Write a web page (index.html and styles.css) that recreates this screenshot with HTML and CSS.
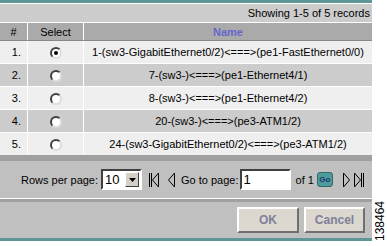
FILE: index.html
```html
<!DOCTYPE html>
<html lang="en">
<head>
    <meta charset="UTF-8">
    <title>Links</title>
    <link rel="stylesheet" href="styles.css">
</head>
<body>
    <div class="page">
        <div class="panel">
            <div class="topline"></div>
            <div class="info">Showing 1-5 of 5 records</div>
            <table class="grid">
                <thead>
                    <tr>
                        <th class="num">#</th>
                        <th class="sel">Select</th>
                        <th class="name">Name</th>
                    </tr>
                </thead>
                <tbody>
                    <tr class="odd">
                        <td class="num">1.</td>
                        <td class="sel"><span class="radio checked"></span></td>
                        <td class="name">1-(sw3-GigabitEthernet0/2)&lt;===&gt;(pe1-FastEthernet0/0)</td>
                    </tr>
                    <tr class="even">
                        <td class="num">2.</td>
                        <td class="sel"><span class="radio"></span></td>
                        <td class="name">7-(sw3-)&lt;===&gt;(pe1-Ethernet4/1)</td>
                    </tr>
                    <tr class="odd">
                        <td class="num">3.</td>
                        <td class="sel"><span class="radio"></span></td>
                        <td class="name">8-(sw3-)&lt;===&gt;(pe1-Ethernet4/2)</td>
                    </tr>
                    <tr class="even">
                        <td class="num">4.</td>
                        <td class="sel"><span class="radio"></span></td>
                        <td class="name">20-(sw3-)&lt;===&gt;(pe3-ATM1/2)</td>
                    </tr>
                    <tr class="odd">
                        <td class="num">5.</td>
                        <td class="sel"><span class="radio"></span></td>
                        <td class="name">24-(sw3-GigabitEthernet0/2)&lt;===&gt;(pe3-ATM1/2)</td>
                    </tr>
                </tbody>
            </table>
            <div class="divider"></div>
            <div class="pager">
                <span class="label">Rows per page:</span>
                <span class="select"><span class="value">10</span><span class="drop"><svg width="7" height="4" viewBox="0 0 7 4"><path d="M0 0h7L3.5 4z" fill="#000"/></svg></span></span>
                <svg class="nav first" width="10" height="16" viewBox="0 0 10 16"><path d="M0.5 1v14M2.5 1v14" stroke="#000" fill="none"/><path d="M9.5 1L3.5 8l6 7z" stroke="#000" fill="#c0c0c0"/></svg>
                <svg class="nav prev" width="8" height="16" viewBox="0 0 8 16"><path d="M7.5 1L1.5 8l6 7z" stroke="#000" fill="#c0c0c0"/></svg>
                <span class="label">Go to page:</span>
                <input class="page-input" type="text" value="1">
                <span class="label">of 1</span>
                <span class="go">Go</span>
                <svg class="nav next" width="8" height="16" viewBox="0 0 8 16"><path d="M0.5 1l6 7-6 7z" stroke="#000" fill="#c0c0c0"/></svg>
                <svg class="nav last" width="10" height="16" viewBox="0 0 10 16"><path d="M0.5 1l6 7-6 7z" stroke="#000" fill="#c0c0c0"/><path d="M7.5 1v14M9.5 1v14" stroke="#000" fill="none"/></svg>
            </div>
            <div class="gap"></div>
            <div class="actions">
                <button class="btn">OK</button>
                <button class="btn">Cancel</button>
            </div>
            <div class="bottomline"></div>
        </div>
        <div class="side"><span class="figno">138464</span></div>
    </div>
</body>
</html>
```

FILE: styles.css
```css
body {
    margin: 0;
    background-color: #ffffff;
    font-family: "Liberation Sans", Arial, sans-serif;
    font-size: 11px;
    color: #000000;
}
.page {
    display: flex;
    width: 387px;
    height: 246px;
}
.panel {
    width: 372px;
    display: flex;
    flex-direction: column;
}
.topline {
    height: 3px;
    background-color: #5f9696;
    border-bottom: 1px solid #ffffff;
}
.info {
    height: 18px;
    line-height: 18px;
    background-color: #cccccc;
    text-align: right;
    padding-right: 2px;
    border-bottom: 1px solid #ffffff;
}
.grid {
    width: 100%;
    border-collapse: collapse;
}
.grid th {
    height: 17px;
    padding: 0;
    background-color: #aaaaaa;
    font-weight: normal;
    border-left: 1px solid #ffffff;
    border-bottom: 1px solid #888888;
}
.grid th:first-child, .grid td:first-child {
    border-left: none;
}
.grid th.name {
    color: #6666cc;
    font-weight: bold;
}
.grid td {
    height: 22px;
    padding: 0;
    border-left: 1px solid #ffffff;
    border-top: 1px solid #ffffff;
    text-align: center;
}
.grid tbody tr:first-child td {
    border-top: none;
}
.grid .num {
    width: 27px;
}
.grid td.num {
    text-align: right;
    padding-right: 6px;
    width: 21px;
}
.grid .sel {
    width: 55px;
}
.odd {
    background-color: #efefef;
}
.even {
    background-color: #cccccc;
}
.radio {
    display: inline-block;
    box-sizing: border-box;
    width: 12px;
    height: 12px;
    border-radius: 50%;
    background-color: #ffffff;
    border: 2px solid;
    border-color: #404040 #dddddd #dddddd #404040;
    vertical-align: middle;
    position: relative;
}
.radio.checked::after {
    content: "";
    position: absolute;
    left: 2px;
    top: 2px;
    width: 4px;
    height: 4px;
    border-radius: 50%;
    background-color: #000000;
}
.divider {
    height: 6px;
    background-color: #a0a0a0;
}
.pager {
    height: 37px;
    background-color: #c0c0c0;
    display: flex;
    align-items: center;
    padding-left: 21px;
    box-sizing: border-box;
}
.select {
    display: flex;
    margin-left: 3px;
    height: 21px;
    box-sizing: border-box;
    width: 41px;
    border: 2px solid;
    border-color: #404040 #ffffff #ffffff #404040;
    background-color: #ffffff;
    align-items: center;
}
.select .value {
    flex: 1;
    font-size: 13px;
    padding-left: 2px;
}
.select .drop {
    width: 14px;
    height: 15px;
    margin-right: 1px;
    box-sizing: border-box;
    background-color: #d4d0c8;
    border: 1px solid;
    border-color: #ffffff #404040 #404040 #ffffff;
    display: flex;
    align-items: center;
    justify-content: center;
}
.nav {
    display: block;
}
.nav.first {
    margin-left: 7px;
}
.nav.prev {
    margin-left: 8px;
    margin-right: 6px;
}
.page-input {
    width: 51px;
    height: 21px;
    box-sizing: border-box;
    margin: 0 5px 0 1px;
    padding: 0 2px;
    border: 2px solid;
    border-color: #404040 #ffffff #ffffff #404040;
    font-family: "Liberation Sans", Arial, sans-serif;
    font-size: 13px;
}
.go {
    margin-left: 3px;
    width: 14px;
    height: 13px;
    border-radius: 3px;
    background-color: #4f9a9a;
    border: 1px solid #2f6a6a;
    color: #203870;
    font-size: 8px;
    font-weight: bold;
    text-align: center;
    line-height: 13px;
}
.nav.next {
    margin-left: 10px;
}
.nav.last {
    margin-left: 3px;
}
.gap {
    height: 1px;
    background-color: #ffffff;
    border-bottom: 3px solid #a0a0a0;
}
.actions {
    height: 36px;
    background-color: #c0c0c0;
    display: flex;
    justify-content: flex-end;
    align-items: center;
    gap: 5px;
    padding-right: 7px;
}
.btn {
    height: 26px;
    width: 62px;
    background-color: #dcd8d0;
    border: 2px solid;
    border-color: #ffffff #707070 #707070 #ffffff;
    color: #80809a;
    font-family: "Liberation Sans", Arial, sans-serif;
    font-size: 12px;
    font-weight: bold;
    padding: 0;
}
.btn + .btn {
    width: 61px;
}
.bottomline {
    height: 3px;
    background-color: #5f9696;
}
.side {
    width: 15px;
    position: relative;
}
.figno {
    position: absolute;
    left: 0;
    top: 241px;
    transform-origin: left top;
    transform: rotate(-90deg) translate(0, 1px);
    font-size: 12px;
    white-space: nowrap;
}
```
